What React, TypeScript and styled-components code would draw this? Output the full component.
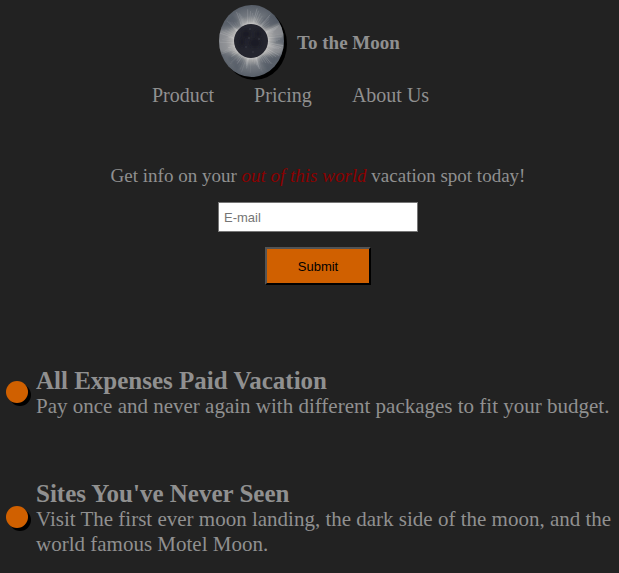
import React from 'react';
import styled, { createGlobalStyle } from 'styled-components';

const GlobalStyle = createGlobalStyle`
  * { box-sizing: border-box; }
  body {
    margin: 0;
    background: #222222;
    color: #909090;
    font-family: "Liberation Serif", "Times New Roman", serif;
    font-size: 20px;
    line-height: 24px;
    overflow-x: hidden;
  }
  h1, h2, p { margin: 0; }
`;

const Header = styled.header`
  display: flex;
  flex-direction: column;
  align-items: center;
  padding-top: 5px;
`;

const Brand = styled.div`
  display: flex;
  align-items: center;
  gap: 10px;
  height: 75px;
`;

const Title = styled.h1`
  font-size: 19px;
  line-height: 24px;
`;

const Nav = styled.nav`
  display: flex;
  gap: 40px;
  padding: 3px 38px 0 0;
`;

const NavLink = styled.a`
  color: inherit;
  text-decoration: none;
`;

const SignUp = styled.form`
  display: flex;
  flex-direction: column;
  align-items: center;
  padding: 57px 0 0 17px;
`;

const Prompt = styled.label`
  font-size: 19px;
  line-height: 24px;
`;

const Accent = styled.em`
  color: #8b0000;
`;

const EmailInput = styled.input`
  width: 200px;
  height: 30px;
  margin: 14px 0 15px;
  padding: 1px 5px;
  border: 1px solid #767676;
  background: #ffffff;
  font: 13px "Liberation Sans", Arial, sans-serif;
  &::placeholder { color: #757575; }
`;

const SubmitButton = styled.button`
  width: 106px;
  height: 38px;
  border: 2px outset #000000;
  background: #d06000;
  color: #000000;
  font: 13px "Liberation Sans", Arial, sans-serif;
`;

const Features = styled.main`
  display: flex;
  flex-direction: column;
  gap: 61px;
  padding: 82px 0 16px 6px;
`;

const Feature = styled.section`
  display: flex;
  align-items: center;
  gap: 8px;
  margin-right: -12px;
`;

const Bullet = styled.span`
  flex: none;
  width: 22px;
  height: 22px;
  margin-bottom: 3px;
  border-radius: 50%;
  background: #d06000;
  box-shadow: 3px 3px 0 #000000;
`;

const FeatureTitle = styled.h2`
  font-size: 25px;
  line-height: 27px;
`;

const FeatureText = styled.p`
  font-size: 21px;
  line-height: 25px;
`;

const MoonDrawing = styled.svg`
  display: block;
  flex: none;
`;

const rays = Array.from({ length: 110 }, (_, i) => {
  const angle = (i * Math.PI * 2) / 110 + Math.sin(i * 7) * 0.05;
  const reach = 21 + ((i * 37) % 13);
  return {
    x1: 32 + Math.cos(angle) * 16,
    y1: 36 + Math.sin(angle) * 16,
    x2: 33 + Math.cos(angle + 0.06) * reach,
    y2: 36 + Math.sin(angle + 0.06) * reach,
    opacity: 0.05 + ((i * 13) % 7) * 0.03,
  };
});

const Moon = () => (
  <MoonDrawing width="68" height="75" viewBox="0 0 68 75" role="img" aria-label="Solar eclipse">
    <defs>
      <radialGradient id="corona" gradientUnits="userSpaceOnUse" cx="32" cy="36" r="36">
        <stop offset="0.46" stopColor="#c4c3c1" />
        <stop offset="0.54" stopColor="#a0a1a2" />
        <stop offset="0.7" stopColor="#747980" />
        <stop offset="1" stopColor="#565d67" />
      </radialGradient>
      <clipPath id="disc"><ellipse cx="32.5" cy="36" rx="32.5" ry="36" /></clipPath>
      <filter id="soft"><feGaussianBlur stdDeviation="1.8" /></filter>
    </defs>
    <ellipse cx="35.5" cy="39" rx="32.5" ry="36" fill="#000000" />
    <g clipPath="url(#disc)">
      <rect width="65" height="72" fill="url(#corona)" />
      <g filter="url(#soft)" opacity="0.45">
        <path d="M45 24 L65 18 L68 31 L47 34Z M47 38 L68 40 L62 49 L43 48Z M19 27 L-2 24 L-2 48 L20 46Z" fill="#b5b4b3" />
        <path d="M38 17 L56 8 L63 18 L46 25Z M44 49 L61 52 L49 66 L39 55Z M21 24 L4 20 L13 9 L24 20Z M20 49 L8 52 L18 66 L27 56Z" fill="#46505b" />
      </g>
      {rays.map((ray, i) => (
        <line key={i} {...ray} stroke="#ffffff" strokeWidth="0.7" />
      ))}
      <circle cx="32" cy="36" r="17" fill="#24252e" />
      <g fill="#171922" opacity="0.65" filter="url(#soft)">
        <ellipse cx="27" cy="29" rx="5" ry="4" />
        <ellipse cx="36" cy="38" rx="6" ry="5" />
        <ellipse cx="39" cy="29" rx="3" ry="4" />
        <ellipse cx="23" cy="37" rx="3" ry="5" />
      </g>
      <g fill="#30323b">
        <circle cx="31" cy="24" r="1" />
        <circle cx="40" cy="34" r="1" />
        <circle cx="27" cy="42" r="1" />
        <circle cx="34" cy="47" r="1" />
        <circle cx="30" cy="33" r="1" />
      </g>
    </g>
  </MoonDrawing>
);

const features = [
  {
    title: 'All Expenses Paid Vacation',
    text: 'Pay once and never again with different packages to fit your budget.',
  },
  {
    title: "Sites You've Never Seen",
    text: 'Visit The first ever moon landing, the dark side of the moon, and the world famous Motel Moon.',
  },
];

export default function App() {
  return (
    <>
      <GlobalStyle />
      <Header>
        <Brand>
          <Moon />
          <Title>To the Moon</Title>
        </Brand>
        <Nav aria-label="Main">
          <NavLink href="#product">Product</NavLink>
          <NavLink href="#pricing">Pricing</NavLink>
          <NavLink href="#about">About Us</NavLink>
        </Nav>
      </Header>
      <SignUp onSubmit={(event: React.FormEvent) => event.preventDefault()}>
        <Prompt htmlFor="email">
          Get info on your <Accent>out of this world</Accent> vacation spot today!
        </Prompt>
        <EmailInput id="email" type="email" placeholder="E-mail" />
        <SubmitButton type="submit">Submit</SubmitButton>
      </SignUp>
      <Features>
        {features.map(({ title, text }) => (
          <Feature key={title}>
            <Bullet />
            <div>
              <FeatureTitle>{title}</FeatureTitle>
              <FeatureText>{text}</FeatureText>
            </div>
          </Feature>
        ))}
      </Features>
    </>
  );
}
